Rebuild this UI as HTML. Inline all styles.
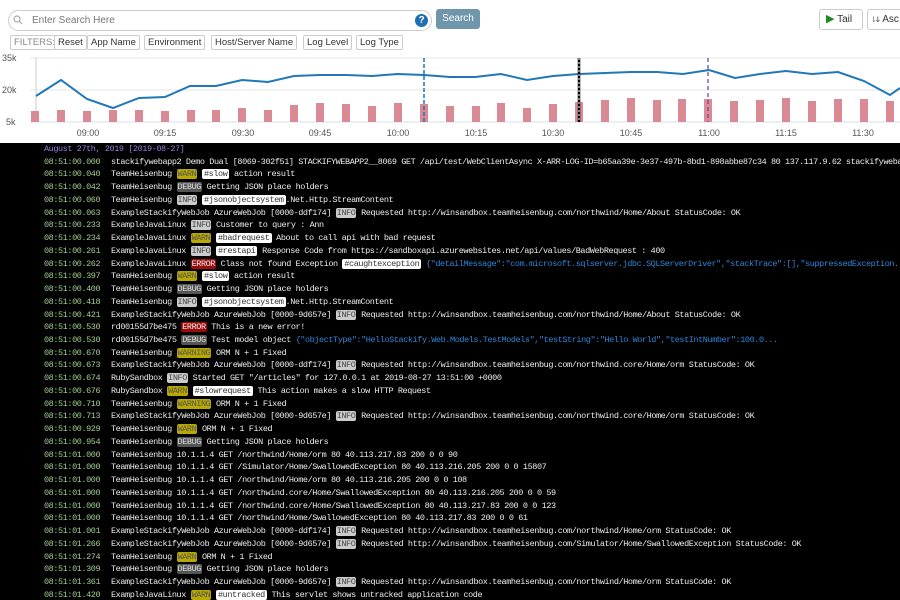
<!DOCTYPE html><html><head><meta charset="utf-8"><style>
*{margin:0;padding:0;box-sizing:border-box}
body{width:900px;height:600px;overflow:hidden;background:#fff;font-family:"Liberation Sans",sans-serif;position:relative}
.abs{position:absolute}
.search{left:8px;top:10px;width:424px;height:21px;border:1px solid #ccc;border-radius:11px;font-size:10px;color:#777;padding:4px 0 0 23px}
.help{left:415px;top:14px;width:13px;height:13px;border-radius:50%;background:#1f6fb5;color:#fff;font-size:10px;font-weight:bold;text-align:center;line-height:13px}
.sbtn{left:436px;top:9px;width:44px;height:20px;background:#6f96ab;border-radius:3px;color:#fff;font-size:10px;text-align:center;line-height:20px}
.btn{top:9px;height:21px;border:1px solid #ccc;border-radius:3px;font-size:10px;color:#333;line-height:19px;background:#fff}
.f{top:35px;height:15px;border:1px solid #ccc;border-radius:2px;font-size:9.5px;color:#333;line-height:13px;padding:0 3px}
.log{left:0;top:143px;width:900px;height:457px;background:#000;font-family:"Liberation Mono",monospace;font-size:8.5px;letter-spacing:-0.42px;color:#ececec;line-height:12.74px;white-space:nowrap;overflow:hidden}
.r{padding-left:44px;height:12.74px}
.t{display:inline-block;width:67px;color:#9fcf8f}
.b{padding:0 1px;border-radius:2px;line-height:10px;display:inline-block}
.W{background:#b8a800;color:#555}.D{background:#555;color:#ddd}.I{background:#ccc;color:#444}.E{background:#9b0b0b;color:#eee}.T{background:#fff;color:#333;padding:0 2px}
.j{color:#2f86d6}
</style></head><body>
<div class="abs search">Enter Search Here</div>
<svg class="abs" style="left:13px;top:15px" width="10" height="10"><circle cx="4" cy="4" r="3" fill="none" stroke="#aaa" stroke-width="1.2"/><line x1="6.2" y1="6.2" x2="9" y2="9" stroke="#aaa" stroke-width="1.2"/></svg>
<div class="abs help">?</div>
<div class="abs sbtn">Search</div>
<div class="abs btn" style="left:819px;width:44px;padding-left:6px"><span style="color:#1a8a1a;font-size:11px">▶</span> Tail</div>
<div class="abs btn" style="left:867px;width:40px;padding-left:4px"><span style="font-size:8px">⇂ↆ</span> Asc</div>
<div class="abs f" style="left:10px;color:#888;border-right:none">FILTERS:</div>
<div class="abs f" style="left:54px">Reset</div>
<div class="abs f" style="left:87px">App Name</div>
<div class="abs f" style="left:144px">Environment</div>
<div class="abs f" style="left:211px">Host/Server Name</div>
<div class="abs f" style="left:303px">Log Level</div>
<div class="abs f" style="left:356px">Log Type</div>
<svg class="abs" style="left:0;top:52px" width="900" height="92" font-family="Liberation Sans" font-size="9" fill="#555">
<line x1="30" y1="6" x2="900" y2="6" stroke="#e4e4e4"/><line x1="30" y1="38" x2="900" y2="38" stroke="#e4e4e4"/><line x1="30" y1="70" x2="900" y2="70" stroke="#dde"/>
<line x1="36" y1="6" x2="36" y2="70" stroke="#ccc"/>
<text x="2" y="9">35k</text><text x="2" y="41">20k</text><text x="6" y="73">5k</text>
<g fill="#d98a94">
<rect x="31" y="59" width="8" height="11"/><rect x="57" y="58" width="8" height="12"/><rect x="83" y="59" width="8" height="11"/><rect x="109" y="58" width="8" height="12"/><rect x="135" y="58" width="8" height="12"/><rect x="161" y="59" width="8" height="11"/><rect x="187" y="58" width="8" height="12"/><rect x="212" y="58" width="8" height="12"/><rect x="238" y="56" width="8" height="14"/><rect x="264" y="58" width="8" height="12"/><rect x="290" y="53" width="8" height="17"/><rect x="316" y="51" width="8" height="19"/><rect x="342" y="52" width="8" height="18"/><rect x="368" y="54" width="8" height="16"/><rect x="394" y="51" width="8" height="19"/><rect x="420" y="52" width="8" height="18"/><rect x="446" y="54" width="8" height="16"/><rect x="472" y="54" width="8" height="16"/><rect x="497" y="51" width="8" height="19"/><rect x="523" y="56" width="8" height="14"/><rect x="549" y="52" width="8" height="18"/><rect x="575" y="50" width="8" height="20"/><rect x="601" y="48" width="8" height="22"/><rect x="627" y="46" width="8" height="24"/><rect x="653" y="48" width="8" height="22"/><rect x="678" y="47" width="8" height="23"/><rect x="704" y="47" width="8" height="23"/><rect x="730" y="49" width="8" height="21"/><rect x="756" y="48" width="8" height="22"/><rect x="782" y="46" width="8" height="24"/><rect x="808" y="49" width="8" height="21"/><rect x="834" y="47" width="8" height="23"/><rect x="860" y="47" width="8" height="23"/><rect x="886" y="49" width="8" height="21"/></g>
<polyline fill="none" stroke="#1f78b8" stroke-width="2" points="36,44 61,28 87,47 113,56 139,46 165,45 190,34 216,34 242,28 268,30 294,24 320,23 346,23 372,24 398,22 424,23 450,25 475,25 501,22 527,28 553,24 579,22 605,21 631,20 657,20 683,22 709,18 735,26 760,22 786,19 812,22 838,20 864,29 890,43 900,36"/>
<line x1="424" y1="6" x2="424" y2="70" stroke="#1f78b8" stroke-width="1.5" stroke-dasharray="4,2"/>
<line x1="579" y1="6" x2="579" y2="70" stroke="#000" stroke-width="2.5"/><line x1="579" y1="6" x2="579" y2="70" stroke="#fff" stroke-width="1" stroke-dasharray="2,2"/>
<line x1="708" y1="6" x2="708" y2="70" stroke="#6a3aa8" stroke-width="1.2" stroke-dasharray="4,3"/>
<g text-anchor="middle"><text x="88" y="84">09:00</text><text x="165" y="84">09:15</text><text x="243" y="84">09:30</text><text x="320" y="84">09:45</text><text x="398" y="84">10:00</text><text x="476" y="84">10:15</text><text x="553" y="84">10:30</text><text x="631" y="84">10:45</text><text x="709" y="84">11:00</text><text x="786" y="84">11:15</text><text x="863" y="84">11:30</text></g>
</svg>
<div class="abs log"><div class="r" style="color:#9a7fe0">August 27th, 2019 [2019-08-27]</div><div class="r"><span class="t">08:51:00.000</span>stackifywebapp2 Demo Dual [8069-302f51] STACKIFYWEBAPP2__8069 GET /api/test/WebClientAsync X-ARR-LOG-ID=b65aa39e-3e37-497b-8bd1-898abbe87c34 80 137.117.9.62 stackifywebapp2</div><div class="r"><span class="t">08:51:00.040</span>TeamHeisenbug <span class="b W">WARN</span> <span class="b T">#slow</span> action result</div><div class="r"><span class="t">08:51:00.042</span>TeamHeisenbug <span class="b D">DEBUG</span> Getting JSON place holders</div><div class="r"><span class="t">08:51:00.060</span>TeamHeisenbug <span class="b I">INFO</span> <span class="b T">#jsonobjectsystem</span>.Net.Http.StreamContent</div><div class="r"><span class="t">08:51:00.063</span>ExampleStackifyWebJob AzureWebJob [0000-ddf174] <span class="b I">INFO</span> Requested http://winsandbox.teamheisenbug.com/northwind/Home/About StatusCode: OK</div><div class="r"><span class="t">08:51:00.233</span>ExampleJavaLinux <span class="b I">INFO</span> Customer to query : Ann</div><div class="r"><span class="t">08:51:00.234</span>ExampleJavaLinux <span class="b W">WARN</span> <span class="b T">#badrequest</span> About to call api with bad request</div><div class="r"><span class="t">08:51:00.261</span>ExampleJavaLinux <span class="b I">INFO</span> <span class="b T">#restapi</span> Response Code from https://sandboxapi.azurewebsites.net/api/values/BadWebRequest : 400</div><div class="r"><span class="t">08:51:00.262</span>ExampleJavaLinux <span class="b E">ERROR</span> Class not found Exception <span class="b T">#caughtexception</span> <span class="j">{"detailMessage":"com.microsoft.sqlserver.jdbc.SQLServerDriver","stackTrace":[],"suppressedException...</span></div><div class="r"><span class="t">08:51:00.397</span>TeamHeisenbug <span class="b W">WARN</span> <span class="b T">#slow</span> action result</div><div class="r"><span class="t">08:51:00.400</span>TeamHeisenbug <span class="b D">DEBUG</span> Getting JSON place holders</div><div class="r"><span class="t">08:51:00.418</span>TeamHeisenbug <span class="b I">INFO</span> <span class="b T">#jsonobjectsystem</span>.Net.Http.StreamContent</div><div class="r"><span class="t">08:51:00.421</span>ExampleStackifyWebJob AzureWebJob [0000-9d657e] <span class="b I">INFO</span> Requested http://winsandbox.teamheisenbug.com/northwind/Home/About StatusCode: OK</div><div class="r"><span class="t">08:51:00.530</span>rd00155d7be475 <span class="b E">ERROR</span> This is a new error!</div><div class="r"><span class="t">08:51:00.530</span>rd00155d7be475 <span class="b D">DEBUG</span> Test model object <span class="j">{"objectType":"HelloStackify.Web.Models.TestModels","testString":"Hello World","testIntNumber":100.0...</span></div><div class="r"><span class="t">08:51:00.670</span>TeamHeisenbug <span class="b W">WARNING</span> ORM N + 1 Fixed</div><div class="r"><span class="t">08:51:00.673</span>ExampleStackifyWebJob AzureWebJob [0000-ddf174] <span class="b I">INFO</span> Requested http://winsandbox.teamheisenbug.com/northwind.core/Home/orm StatusCode: OK</div><div class="r"><span class="t">08:51:00.674</span>RubySandbox <span class="b I">INFO</span> Started GET "/articles" for 127.0.0.1 at 2019-08-27 13:51:00 +0000</div><div class="r"><span class="t">08:51:00.676</span>RubySandbox <span class="b W">WARN</span> <span class="b T">#slowrequest</span> This action makes a slow HTTP Request</div><div class="r"><span class="t">08:51:00.710</span>TeamHeisenbug <span class="b W">WARNING</span> ORM N + 1 Fixed</div><div class="r"><span class="t">08:51:00.713</span>ExampleStackifyWebJob AzureWebJob [0000-9d657e] <span class="b I">INFO</span> Requested http://winsandbox.teamheisenbug.com/northwind.core/Home/orm StatusCode: OK</div><div class="r"><span class="t">08:51:00.929</span>TeamHeisenbug <span class="b W">WARN</span> ORM N + 1 Fixed</div><div class="r"><span class="t">08:51:00.954</span>TeamHeisenbug <span class="b D">DEBUG</span> Getting JSON place holders</div><div class="r"><span class="t">08:51:01.000</span>TeamHeisenbug 10.1.1.4 GET /northwind/Home/orm 80 40.113.217.83 200 0 0 90</div><div class="r"><span class="t">08:51:01.000</span>TeamHeisenbug 10.1.1.4 GET /Simulator/Home/SwallowedException 80 40.113.216.205 200 0 0 15807</div><div class="r"><span class="t">08:51:01.000</span>TeamHeisenbug 10.1.1.4 GET /northwind/Home/orm 80 40.113.216.205 200 0 0 108</div><div class="r"><span class="t">08:51:01.000</span>TeamHeisenbug 10.1.1.4 GET /northwind.core/Home/SwallowedException 80 40.113.216.205 200 0 0 59</div><div class="r"><span class="t">08:51:01.000</span>TeamHeisenbug 10.1.1.4 GET /northwind.core/Home/SwallowedException 80 40.113.217.83 200 0 0 123</div><div class="r"><span class="t">08:51:01.000</span>TeamHeisenbug 10.1.1.4 GET /northwind/Home/SwallowedException 80 40.113.217.83 200 0 0 61</div><div class="r"><span class="t">08:51:01.001</span>ExampleStackifyWebJob AzureWebJob [0000-ddf174] <span class="b I">INFO</span> Requested http://winsandbox.teamheisenbug.com/northwind/Home/orm StatusCode: OK</div><div class="r"><span class="t">08:51:01.266</span>ExampleStackifyWebJob AzureWebJob [0000-9d657e] <span class="b I">INFO</span> Requested http://winsandbox.teamheisenbug.com/Simulator/Home/SwallowedException StatusCode: OK</div><div class="r"><span class="t">08:51:01.274</span>TeamHeisenbug <span class="b W">WARN</span> ORM N + 1 Fixed</div><div class="r"><span class="t">08:51:01.309</span>TeamHeisenbug <span class="b D">DEBUG</span> Getting JSON place holders</div><div class="r"><span class="t">08:51:01.361</span>ExampleStackifyWebJob AzureWebJob [0000-9d657e] <span class="b I">INFO</span> Requested http://winsandbox.teamheisenbug.com/northwind/Home/orm StatusCode: OK</div><div class="r"><span class="t">08:51:01.420</span>ExampleJavaLinux <span class="b W">WARN</span> <span class="b T">#untracked</span> This servlet shows untracked application code</div></div>
</body></html>
